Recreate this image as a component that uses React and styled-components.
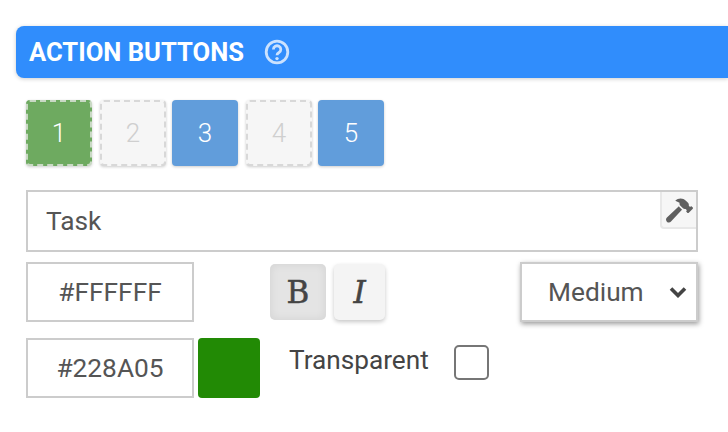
import React from "react";
import styled, { createGlobalStyle } from "styled-components";
import { FaHammer } from "react-icons/fa";

const GlobalStyle = createGlobalStyle`
  html, body {
    margin: 0;
    padding: 0;
    background: #fff;
    overflow: hidden;
    font-family: Roboto, "Liberation Sans", sans-serif;
  }
`;

const Page = styled.div`
  width: 728px;
  height: 432px;
  padding-top: 26px;
  box-sizing: border-box;
  overflow: hidden;
`;

const Header = styled.div`
  display: flex;
  align-items: center;
  gap: 20px;
  height: 52px;
  margin-left: 16px;
  padding-left: 13px;
  background: #308dfc;
  border-radius: 8px 0 0 8px;
  box-shadow: 0 1px 4px rgba(0, 0, 0, 0.2);
  color: #fff;
  font-size: 25.6px;
  font-weight: 700;
`;

const HelpIcon = styled.svg`
  width: 26px;
  height: 26px;
  color: rgba(255, 255, 255, 0.75);
`;

const Body = styled.div`
  padding: 22px 30px 0 26px;
`;

const NumberRow = styled.div`
  display: flex;
  gap: 6px;
  margin-bottom: 24px;
`;

const NumberButton = styled.div`
  width: 66px;
  height: 66px;
  box-sizing: border-box;
  display: flex;
  align-items: center;
  justify-content: center;
  border-radius: 4px;
  font-size: 26px;
  font-weight: 300;
  box-shadow: 0 1px 3px rgba(0, 0, 0, 0.2);
  margin-left: ${(p) => (p.$kind === "off" ? "2px" : "0")};
  background: ${(p) => (p.$kind === "green" ? "#6eaa60" : p.$kind === "blue" ? "#619ddb" : "#f6f6f6")};
  color: ${(p) => (p.$kind === "off" ? "#cfcfcf" : "#fff")};
  border: ${(p) =>
    p.$kind === "green" ? "2px dashed #c9d9c4" : p.$kind === "off" ? "2px dashed #d8d8d8" : "none"};
`;

const TaskField = styled.div`
  position: relative;
  height: 62px;
  margin-bottom: 10px;
`;

const TextInput = styled.input`
  display: block;
  box-sizing: border-box;
  width: ${(p) => p.$width || "100%"};
  height: ${(p) => p.$height || "60px"};
  padding: 0 ${(p) => (p.$center ? "0" : "18px")};
  border: 2px solid #cccccc;
  border-radius: 0;
  outline: none;
  background: #fff;
  color: #555;
  font-family: Roboto, sans-serif;
  font-size: 26.3px;
  text-align: ${(p) => (p.$center ? "center" : "left")};
`;

const HammerButton = styled.div`
  position: absolute;
  top: 2px;
  right: 2px;
  width: 36px;
  height: 37px;
  padding-top: 2px;
  display: flex;
  align-items: center;
  justify-content: center;
  box-sizing: border-box;
  background: #f6f6f6;
  border-left: 2px solid #e8e8e8;
  border-bottom: 2px solid #e8e8e8;
  border-radius: 0 0 0 4px;
  color: #5f5f5f;
  font-size: 27px;
`;

const StyleRow = styled.div`
  display: flex;
  align-items: center;
  height: 60px;
  margin-bottom: 16px;
`;

const Swatch = styled.div`
  width: 62px;
  height: 60px;
  margin-left: 4px;
  border-radius: 4px;
  background: ${(p) => p.$color};
`;

const FormatButton = styled.div`
  width: ${(p) => p.$width}px;
  height: 56px;
  margin-left: ${(p) => p.$gap}px;
  display: flex;
  align-items: center;
  justify-content: center;
  border-radius: 5px;
  color: #444;
  font-family: "DejaVu Serif", serif;
  font-size: 31px;
  -webkit-text-stroke: 0.5px #444;
  font-style: ${(p) => (p.$italic ? "italic" : "normal")};
  background: ${(p) => (p.$active ? "#e4e4e4" : "#f4f4f4")};
  box-shadow: ${(p) => (p.$active ? "inset 0 0 10px rgba(0, 0, 0, 0.08)" : "0 2px 4px rgba(0, 0, 0, 0.22)")};
`;

const SizeSelect = styled.div`
  width: 178px;
  height: 60px;
  margin-left: auto;
  box-sizing: border-box;
  display: flex;
  align-items: center;
  justify-content: space-between;
  padding: 0 9px 0 26px;
  border: 2px solid #cccccc;
  background: #fff;
  box-shadow: 1px 2px 5px rgba(0, 0, 0, 0.4);
  color: #555;
  font-size: 26.3px;
`;

const Chevron = styled.svg`
  width: 18px;
  height: 12px;
  color: #444;
`;

const TransparentLabel = styled.span`
  margin-left: 29px;
  margin-bottom: 16px;
  color: #444;
  font-size: 26.2px;
`;

const CheckBox = styled.div`
  width: 35px;
  height: 35px;
  margin-left: 25px;
  margin-bottom: 12px;
  box-sizing: border-box;
  border: 2px solid #767676;
  border-radius: 5px;
  background: #fff;
`;

export default function App() {
  return (
    <Page>
      <GlobalStyle />
      <Header>
        ACTION BUTTONS
        <HelpIcon viewBox="0 0 26 26" fill="none" stroke="currentColor">
          <circle cx="13" cy="13" r="10.8" strokeWidth="2.8" />
          <path d="M9.4 10.4a3.7 3.6 0 1 1 5.6 3.1c-1.3.8-2 1.4-2 2.8" strokeWidth="2.8" />
          <circle cx="13" cy="19.6" r="1.7" fill="currentColor" stroke="none" />
        </HelpIcon>
      </Header>
      <Body>
        <NumberRow>
          <NumberButton $kind="green">1</NumberButton>
          <NumberButton $kind="off">2</NumberButton>
          <NumberButton $kind="blue">3</NumberButton>
          <NumberButton $kind="off">4</NumberButton>
          <NumberButton $kind="blue">5</NumberButton>
        </NumberRow>
        <TaskField>
          <TextInput $height="62px" defaultValue="Task" />
          <HammerButton>
            <FaHammer />
          </HammerButton>
        </TaskField>
        <StyleRow>
          <TextInput $width="168px" $center defaultValue="#FFFFFF" />
          <Swatch $color="#ffffff" />
          <FormatButton $width={56} $gap={10} $active>B</FormatButton>
          <FormatButton $width={51} $gap={8} $italic>I</FormatButton>
          <SizeSelect>
            Medium
            <Chevron viewBox="0 0 18 12" fill="none" stroke="currentColor" strokeWidth="3.6">
              <path d="M2 2.5l7 7 7-7" />
            </Chevron>
          </SizeSelect>
        </StyleRow>
        <StyleRow>
          <TextInput $width="168px" $center defaultValue="#228A05" />
          <Swatch $color="#228a05" />
          <TransparentLabel>Transparent</TransparentLabel>
          <CheckBox />
        </StyleRow>
      </Body>
    </Page>
  );
}
